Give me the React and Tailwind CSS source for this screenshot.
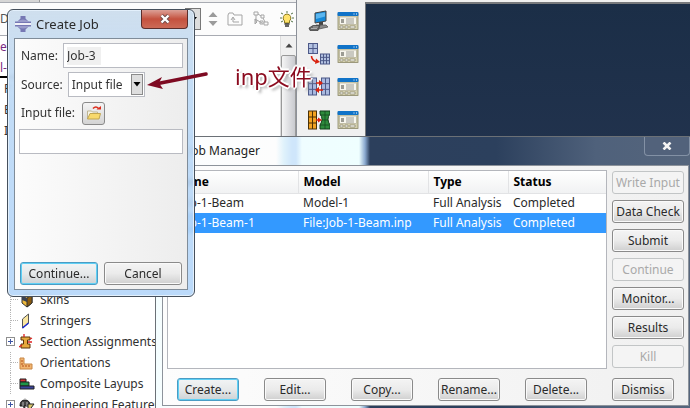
import React from "react";

const BTN =
  "flex h-[23px] shrink-0 items-center justify-center rounded-[3px] border text-xs leading-4 whitespace-nowrap";
const NORMAL =
  " border-[#8a8a8a] bg-linear-to-b from-[#f4f4f4] via-[#ebebeb] to-[#cfcfcf] text-[#2a2a2a] shadow-[inset_0_0_0_1px_#fafafa]";
const FOCUS =
  " border-[#4a9cc4] bg-linear-to-b from-[#f2f4f5] via-[#e6e9ea] to-[#cdd2d5] text-[#2a2a2a] shadow-[inset_0_0_0_1px_#5fd0f5]";
const DISABLED = " border-[#c2c5c6] bg-[#f4f4f4] text-[#a9a9a9]";

function Button({ children, kind = "normal", width }) {
  const look = kind === "focus" ? FOCUS : kind === "disabled" ? DISABLED : NORMAL;
  return (
    <button type="button" disabled={kind === "disabled"} className={`${BTN}${look} ${width}`}>
      {children}
    </button>
  );
}

function ManagerIcon() {
  return (
    <svg viewBox="0 0 22 20" className="h-5 w-[22px]">
      <rect x="1" y="3" width="20" height="15.500" fill="#d3cfae" stroke="#8b8868" strokeWidth="0.8" />
      <rect x="0.500" y="1" width="21" height="4" rx="1" fill="#1073c8" />
      <path d="M16.500 3h1M19 3h1" stroke="#fff" />
      <rect x="2.500" y="6" width="17" height="7.500" fill="#f7f6ee" stroke="#a9a68c" strokeWidth="0.6" />
      <path d="M4 8h3v4H4z" fill="#9c9c94" />
      <path d="M9 8h8M9 10h8M9 12h8" stroke="#9c9c94" />
      <path d="M3 15h3v2H3zM8 15h3v2H8zM13 15h5v2h-5z" fill="#fbfbf4" stroke="#77745b" strokeWidth="0.6" />
    </svg>
  );
}

function Mesh({ x, y, w, h, fill, line, cols = 2, rows = 2 }) {
  return (
    <g fill={fill} stroke={line} strokeWidth="1">
      <rect x={x} y={y} width={w} height={h} />
      {Array.from({ length: cols - 1 }, (_, i) => (
        <path key={"c" + i} d={`M${x + (w * (i + 1)) / cols} ${y}v${h}`} />
      ))}
      {Array.from({ length: rows - 1 }, (_, i) => (
        <path key={"r" + i} d={`M${x} ${y + (h * (i + 1)) / rows}h${w}`} />
      ))}
    </g>
  );
}

const toolIcons = [
  <svg key="pc" viewBox="0 0 22 22" className="h-[22px] w-[22px]">
    <path d="M7 3l11-2v10l-11 2z" fill="#1689d8" stroke="#444" />
    <path d="M8 4l9-1.500v4L8 9z" fill="#5bb6ef" />
    <path d="M11 12h4v4h-4z" fill="#444" />
    <path d="M8 15h10l2 2-9 2z" fill="#8b8b8b" stroke="#555" strokeWidth="0.8" />
    <path d="M1 18l4-2.500h7l-2 5H2z" fill="#666" stroke="#444" strokeWidth="0.8" />
    <path d="M3 18.500h6M5 17h5" stroke="#ccc" strokeWidth="0.7" />
  </svg>,
  <svg key="map" viewBox="0 0 22 22" className="h-[22px] w-[22px]">
    <Mesh x={0.5} y={0.5} w={9} h={10} fill="#b4c3e2" line="#4d5988" />
    <Mesh x={12.5} y={11} w={9} h={10} fill="#b4c3e2" line="#4d5988" cols={3} rows={3} />
    <path d="M3.500 13q0 4 5 6" fill="none" stroke="#d8230f" strokeWidth="1.6" />
    <path d="M8 15.500l4 3.500-5 2z" fill="#d8230f" />
  </svg>,
  <svg key="swap" viewBox="0 0 22 22" className="h-[22px] w-[22px]">
    <Mesh x={0.5} y={2} w={8} h={17} fill="#a9b9df" line="#4d5988" rows={3} />
    <Mesh x={13.5} y={2} w={8} h={17} fill="#a9b9df" line="#4d5988" rows={3} />
    <path d="M8 7h6M9 14h6" stroke="#d8230f" strokeWidth="1.500" />
    <path d="M11 4l4 3-4 3zM11 11l-4 3 4 3z" fill="#d8230f" />
  </svg>,
  <svg key="opt" viewBox="0 0 22 22" className="h-[22px] w-[22px]">
    <Mesh x={0.5} y={2} w={8} h={18} fill="#f3a321" line="#4a3106" rows={3} />
    <path d="M12 2h10v3q-4 5 0 11v4H12v-4q4-6 0-11z" fill="#2d8b3c" stroke="#123f1a" />
    <path d="M12 6h9M14 11h6M12 16h9M17 2v18" stroke="#123f1a" strokeWidth="0.7" />
    <path d="M8 11h4" stroke="#d8230f" strokeWidth="1.5" />
    <path d="M10 8.500l4 2.500-4 2.500z" fill="#d8230f" />
  </svg>,
];

const treeIcons = {
  skins: (
    <svg viewBox="0 0 16 16" className="h-4 w-4">
      <path d="M3 3l5-2 5 2v8l-5 4-5-4z" fill="#f0b93a" stroke="#333" />
      <path d="M8 6l5-3v8l-5 4z" fill="#8a5b10" stroke="#333" />
      <path d="M3 3l5 3v4L3 8z" fill="#3a4252" />
    </svg>
  ),
  stringers: (
    <svg viewBox="0 0 16 16" className="h-4 w-4">
      <path d="M3.500 6l6-5v9l-6 5z" fill="#fae6a0" stroke="#555" />
      <path d="M3.500 15l6-5" stroke="#1a2ad0" strokeWidth="1.6" />
    </svg>
  ),
  section: (
    <svg viewBox="0 0 16 16" className="h-4 w-4">
      <path d="M2 3h9v3H8.500v4H11v4H2v-4h2.500V6H2z" fill="#e5a83c" stroke="#5a3208" />
      <path d="M5 0v3M9 8h4M11 5l2-1M0 13l3-2" stroke="#e02020" strokeWidth="1.3" />
    </svg>
  ),
  orientations: (
    <svg viewBox="0 0 16 16" className="h-4 w-4">
      <path d="M1 3h4v6h8v5H1z" fill="#f1b571" stroke="#c88747" />
      <path d="M3 5v6h8" fill="none" stroke="#b3501d" strokeDasharray="2 1" />
    </svg>
  ),
  layups: (
    <svg viewBox="0 0 16 16" className="h-4 w-4">
      <path d="M1 3h6v3H1z" fill="#d82e35" stroke="#222" />
      <path d="M1 6h9v4H1z" fill="#1f9448" stroke="#222" />
      <path d="M1 10h14v3H1z" fill="#39439c" stroke="#222" />
    </svg>
  ),
  features: (
    <svg viewBox="0 0 16 16" className="h-4 w-4">
      <path d="M1 9q0-6 5-6t5 6z" fill="#444" stroke="#111" />
      <path d="M4 9V5M8 9V5M6 3V1" stroke="#bbb" />
      <path d="M3 12h2M5 9l1 5" stroke="#333" strokeWidth="2" />
      <path d="M9 7h6l-3 4 3 4H9z" fill="#d9c86d" stroke="#222" />
    </svg>
  ),
};

const tree = [
  { label: "Skins", icon: "skins" },
  { label: "Stringers", icon: "stringers" },
  { label: "Section Assignments", icon: "section", open: true },
  { label: "Orientations", icon: "orientations" },
  { label: "Composite Layups", icon: "layups" },
  { label: "Engineering Features", icon: "features", open: true },
];

function TreeRow({ label, icon, open }) {
  return (
    <li className="flex h-[21px] items-center">
      <span className="flex w-[19px] shrink-0 items-center pl-[6px]">
        {open ? (
          <svg viewBox="0 0 9 9" className="h-[9px] w-[9px]">
            <rect x="0.5" y="0.5" width="8" height="8" fill="#fff" stroke="#8f8f8f" />
            <path d="M2 4.500h5M4.500 2v5" stroke="#3d55a5" />
          </svg>
        ) : (
          <span className="ml-1 flex h-[21px] w-2 items-center border-l border-dotted border-[#b5b5b5]">
            <span className="w-full border-t border-dotted border-[#b5b5b5]" />
          </span>
        )}
      </span>
      {treeIcons[icon]}
      <span className="pl-[5px] text-xs leading-4 whitespace-nowrap">{label}</span>
    </li>
  );
}

function ModelTree() {
  return (
    <section className="flex w-[297px] shrink-0 flex-col border-r border-[#8d9199] bg-white">
      <div className="flex h-[2px] shrink-0 bg-[#f0f0f0]">
        <div className="w-10 border-r border-[#999999] bg-[#d6d6d6]" />
      </div>
      <div className="flex h-[34px] shrink-0 items-center justify-between border-t border-b border-[#a8abb2] bg-[#fcfcfc] pr-px">
        <span className="text-xs text-[#555555]">D</span>
        <div className="flex items-center">
          <button type="button" aria-label="Choose database" className="flex h-[22px] w-[16px] items-center justify-center border border-[#777777] bg-[#dddddd]">
            <svg viewBox="0 0 8 5" className="h-[5px] w-2"><path d="M0 0h8L4 5z" fill="#000" /></svg>
          </button>
          <svg viewBox="0 0 10 18" className="ml-[7px] h-[18px] w-[10px]"><path d="M5 2l4.500 5h-9zM5 16l4.500-5h-9z" fill="#9b9b9b" /></svg>
          <svg viewBox="0 0 16 14" className="ml-[9px] h-[14px] w-4" fill="none" stroke="#a5a5a5">
            <path d="M1 13V3l1-2h4l1 2h8v10zM12 10H6V6M4 8l2-3 2 3" />
          </svg>
          <svg viewBox="0 0 16 16" className="ml-[10px] h-4 w-4" fill="none" stroke="#a5a5a5">
            <path d="M1 1h4v3H1zM8 4h3v3H8zM11 11h4v3h-4zM3 4v8M5 3l3 2M10 7l2 4M2 8l7 4M2 8v5l2-2zM7 10h3v3H7z" />
          </svg>
          <svg viewBox="0 0 16 16" className="ml-[10px] h-4 w-4">
            <path d="M8 3a4 4 0 0 0-2.500 7v2h5v-2A4 4 0 0 0 8 3z" fill="#ffe36b" stroke="#8a7a20" />
            <path d="M5.500 13h5M6 15h4" stroke="#333" strokeWidth="1.5" />
            <path d="M8 0v2M2 2l2 1M14 2l-2 1M1 7h2M13 7h2M2 11l2-1M14 11l-2-1" stroke="#55744a" />
          </svg>
        </div>
      </div>
      <div className="flex min-h-0 flex-1">
        <div className="min-w-0 flex-1 overflow-hidden">
          <div className="h-[21px] text-xs leading-[21px] text-[#7a2b84]">el</div>
          <div className="h-[21px] w-10 border-b-2 border-black text-xs leading-[21px] text-[#7a2b84]">l-</div>
          <ul className="pl-1 text-xs leading-[21px] text-[#333333]">
            <li>P</li>
            <li>E</li>
            <li>I</li>
          </ul>
          <div className="h-[148px]" />
          <ul className="text-[#303030]">
            {tree.map((row) => (
              <TreeRow key={row.label} {...row} />
            ))}
          </ul>
        </div>
        <div className="flex w-4 flex-col border-l border-[#dcdcdc] bg-[#f0f0f0]">
          <div className="flex h-[19px] items-center justify-center">
            <svg viewBox="0 0 8 5" className="h-[5px] w-2"><path d="M0.500 4.500h7L4 0.500z" fill="#444" /></svg>
          </div>
          <div className="flex-1 rounded-xs border border-[#999999] bg-linear-to-r from-[#f5f5f5] to-[#c9cacf]" />
        </div>
      </div>
    </section>
  );
}

const jobs = [
  ["Job-1-Beam", "Model-1", "Full Analysis", "Completed"],
  ["Job-1-Beam-1", "File:Job-1-Beam.inp", "Full Analysis", "Completed"],
];

const sideButtons = [
  ["Write Input", "disabled"],
  ["Data Check", "normal"],
  ["Submit", "normal"],
  ["Continue", "disabled"],
  ["Monitor...", "normal"],
  ["Results", "normal"],
  ["Kill", "disabled"],
];

function JobManager() {
  return (
    <section className="absolute top-[136px] right-0 left-[155px] border-t border-l border-[#6b7076] bg-[linear-gradient(to_right,#f4feff_0px,#fbfdfe_20px,#fdfdfd_120px,#dff2fb_128px,#cfe6fb_136px,#cfe6fb_140px,#effdff_146px,#efffff_203px,#8aa9cf_209px,#2c3f5c_214px,#2c405d_340px,#4f617b_440px,#55657c_535px)] pb-2 pl-[6px]">
      <header className="flex h-7 items-start justify-between">
        <h2 className="pt-[5px] pl-[26px] text-xs leading-[18px] text-[#222222]">Job Manager</h2>
        <button
          type="button"
          aria-label="Close Job Manager"
          className="flex h-[19px] w-[46px] items-center justify-center rounded-b-[4px] border border-t-0 border-[#8391a5] bg-[#52627b]"
        >
          <svg viewBox="0 0 10 8" className="h-2 w-[10px]"><path d="M1.500 0.500l7 7M8.500 0.500l-7 7" stroke="#f3f3f3" strokeWidth="2.600" /></svg>
        </button>
      </header>
      <div className="mr-px border border-[#8d939b] bg-linear-to-r from-[#fdfdfd] to-[#f0f0f0] px-1 pt-1 pb-1">
        <div className="flex gap-[5px]">
          <div className="min-w-0 flex-1 border border-[#b4b6bc] bg-white">
            <table className="w-full table-fixed border-collapse text-left text-xs leading-4 text-[#2a2a2a]">
              <colgroup>
                <col className="w-[130px]" />
                <col className="w-[130px]" />
                <col className="w-[80px]" />
                <col />
              </colgroup>
              <thead>
                <tr className="h-[22px] bg-linear-to-b from-white to-[#f1f2f3] text-black">
                  {["Name", "Model", "Type", "Status"].map((h) => (
                    <th key={h} className="border-r border-b border-[#e2e3e5] p-0 pl-[5px] font-bold last:border-r-0">
                      {h}
                    </th>
                  ))}
                </tr>
              </thead>
              <tbody>
                {jobs.map((job, i) => (
                  <tr key={job[0]} className={i === 1 ? "h-5 bg-[#3399ff] text-white" : "h-5"}>
                    {job.map((cell, c) => (
                      <td key={c} className="p-0 pl-[5px] whitespace-nowrap first:pl-[11px]">{cell}</td>
                    ))}
                  </tr>
                ))}
              </tbody>
            </table>
          </div>
          <div className="flex w-[72px] flex-col gap-[6px] py-px">
            {sideButtons.map(([label, kind]) => (
              <Button key={label} kind={kind} width="w-full">{label}</Button>
            ))}
          </div>
        </div>
        <div className="mt-[9px] flex justify-between pr-[10px] pl-[10px]">
          <Button kind="focus" width="w-[62px]">Create...</Button>
          <Button width="w-[62px]">Edit...</Button>
          <Button width="w-[62px]">Copy...</Button>
          <Button width="w-[62px]">Rename...</Button>
          <Button width="w-[62px]">Delete...</Button>
          <Button width="w-[62px]">Dismiss</Button>
        </div>
      </div>
    </section>
  );
}

function CreateJob() {
  return (
    <section className="absolute top-[9px] left-[7px] w-[188px] rounded-md border border-[#46505c] bg-linear-to-b from-[#cfdfee] via-[#bcd9f6]/90 via-30% to-[#b4d6fa]/90 px-[6px] pb-[6px] shadow-[inset_0_0_0_1px_#e3f0fc] backdrop-blur-[2px]">
      <header className="flex h-7 items-start">
        <svg viewBox="0 0 16 16" className="mt-[6px] ml-px h-4 w-4">
          <path d="M5.500 0h5v2.500L13.500 5.500H16v5h-2.500L10.500 13.500V16h-5v-2.500L2.500 10.500H0v-5h2.500L5.500 2.500z" fill="#7678b4" />
          <path d="M3 5q5-3 10 0v1H3zM3 10h10v1q-5 3-10 0z" fill="#9a9ccb" />
          <path d="M0 8h16" stroke="#fff" strokeWidth="1.800" />
        </svg>
        <h2 className="flex-1 pt-[5px] pl-[5px] text-[13px] leading-[18px] whitespace-nowrap text-[#2b2b2b]">Create Job</h2>
        <button
          type="button"
          aria-label="Close Create Job"
          className="flex h-[19px] w-[47px] items-center justify-center rounded-b-[4px] border border-t-0 border-[#5c2e2c] bg-linear-to-b from-[#dba097] via-[#c4513f] to-[#cc6a57]"
        >
          <svg viewBox="0 0 12 10" className="h-[10px] w-3">
            <path d="M2.500 1.500l7 7M9.500 1.500l-7 7" stroke="#6b4b4b" strokeWidth="4" />
            <path d="M2.500 1.500l7 7M9.500 1.500l-7 7" stroke="#fff" strokeWidth="2.400" />
          </svg>
        </button>
      </header>
      <form className="flex h-[252px] flex-col border border-[#7f8c99] bg-linear-to-r from-[#fcfcfc] to-[#ededed] p-1 text-xs leading-4 text-[#333333]" onSubmit={(e) => e.preventDefault()}>
        <div className="flex h-[25px] items-center gap-[5px] pl-[2px]">
          <label htmlFor="job-name">Name:</label>
          <span className="flex h-[25px] min-w-0 flex-1 items-center border border-[#b9bbc2] bg-white pl-[3px]">
            <input id="job-name" defaultValue="Job-3" className="h-[18px] w-[34px] bg-[#f0f0f0] text-xs outline-none" />
          </span>
        </div>
        <div className="mt-1 flex h-[25px] items-center gap-[5px] pl-[2px]">
          <label htmlFor="job-source">Source:</label>
          <span className="relative flex h-[25px] w-[77px] border border-[#b9bbc2] bg-white p-px">
            <select id="job-source" className="w-full appearance-none bg-transparent pl-[2px] text-xs outline-none">
              <option>Input file</option>
            </select>
            <span className="pointer-events-none absolute top-px right-px bottom-px flex w-3 items-center justify-center border border-[#8b8b8b] bg-[#dedede]">
              <svg viewBox="0 0 8 5" className="h-[5px] w-2"><path d="M0.500 0h7L4 4.500z" fill="#000" /></svg>
            </span>
          </span>
        </div>
        <div className="mt-1 flex h-[24px] items-center gap-[7px] pl-[2px]">
          <label htmlFor="job-file">Input file:</label>
          <button type="button" aria-label="Browse for input file" className="flex h-[23px] w-[23px] items-center justify-center rounded-[3px] border border-[#8a8a8a] bg-linear-to-b from-[#f4f4f4] to-[#d4d4d4]">
            <svg viewBox="0 0 16 16" className="h-4 w-4">
              <path d="M1.500 14V6h4l1 1h5v2" fill="#f6f4e6" stroke="#bdb493" />
              <path d="M1.500 14L4 8.500h10.500l-1.500 5.500z" fill="#f8d96c" stroke="#c2a650" />
              <path d="M7 3.500q3-3 5.500 0" fill="none" stroke="#dc2c1c" strokeWidth="1.600" />
              <path d="M10.500 4.500H15V1z" fill="#dc2c1c" />
            </svg>
          </button>
        </div>
        <input id="job-file" className="mt-1 h-[25px] w-full shrink-0 border border-[#b9bbc2] bg-white px-1 outline-none" />
        <div className="mt-auto flex gap-[6px] px-px">
          <Button kind="focus" width="flex-1">Continue...</Button>
          <Button width="flex-1">Cancel</Button>
        </div>
      </form>
    </section>
  );
}

export default function App() {
  return (
    <main className="relative flex h-screen min-h-[408px] overflow-hidden bg-[#f0f0f0] font-['Noto_Sans','Noto_Sans_CJK_SC',sans-serif]">
      <ModelTree />
      <nav className="grid shrink-0 auto-rows-[33px] grid-cols-[22px_22px] content-start gap-x-[7px] pt-[4px] pr-[6px] pl-[11px]">
        {toolIcons.map((icon, i) => (
          <React.Fragment key={i}>
            <button type="button" aria-label={`Tool ${i + 1}`} className="flex items-center justify-center">{icon}</button>
            <button type="button" aria-label={`Manager ${i + 1}`} className="flex items-center justify-center"><ManagerIcon /></button>
          </React.Fragment>
        ))}
      </nav>
      <div className="mt-[2px] min-w-0 flex-1 border-t-2 border-l border-[#77797c] bg-linear-to-b from-[#1b2e47] to-[#2c3a58]" />
      <JobManager />
      <CreateJob />
      <div className="absolute top-[61px] left-[146px] flex items-start">
        <svg viewBox="0 0 64 34" className="h-[34px] w-16">
          <path d="M12 22.500L60 13" stroke="#7e0a22" strokeWidth="3.600" strokeLinecap="round" />
          <path d="M1 24l15-8-3 6 4 6z" fill="#7e0a22" />
        </svg>
        <span className="pl-[25px] text-[22px] leading-[30px] whitespace-nowrap text-[#8b0a1e] [text-shadow:2px_0_#fff,-2px_0_#fff,0_2px_#fff,0_-2px_#fff,1px_1px_#fff,-1px_-1px_#fff,3px_3px_3px_#999]">
          inp文件
        </span>
      </div>
    </main>
  );
}
